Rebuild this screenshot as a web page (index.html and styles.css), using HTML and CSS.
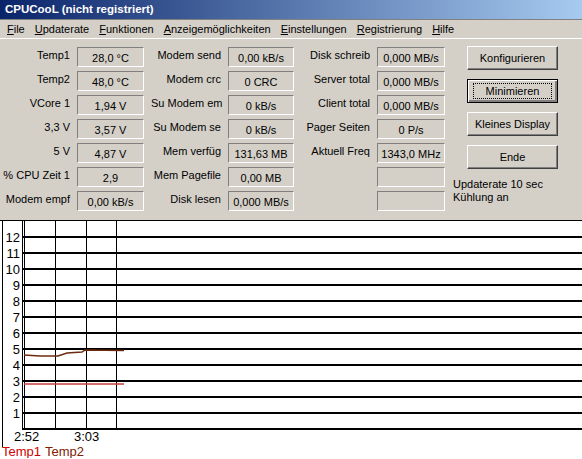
FILE: index.html
```html
<!DOCTYPE html>
<html lang="de">
<head>
  <meta charset="UTF-8">
  <title>CPUCooL</title>
  <link rel="stylesheet" href="styles.css">
</head>
<body>
  <div class="window">
    <div class="titlebar">CPUCooL (nicht registriert)</div>

    <div class="menubar">
      <span class="menu"><u>F</u>ile</span>
      <span class="menu"><u>U</u>pdaterate</span>
      <span class="menu"><u>F</u>unktionen</span>
      <span class="menu"><u>A</u>nzeigemöglichkeiten</span>
      <span class="menu"><u>E</u>instellungen</span>
      <span class="menu"><u>R</u>egistrierung</span>
      <span class="menu"><u>H</u>ilfe</span>
    </div>

    <div class="panel">
      <div class="fields col1">
        <span class="label">Temp1</span><span class="value">28,0 °C</span>
        <span class="label">Temp2</span><span class="value">48,0 °C</span>
        <span class="label">VCore 1</span><span class="value">1,94 V</span>
        <span class="label">3,3 V</span><span class="value">3,57 V</span>
        <span class="label">5 V</span><span class="value">4,87 V</span>
        <span class="label">% CPU Zeit 1</span><span class="value">2,9</span>
        <span class="label">Modem empf</span><span class="value">0,00 kB/s</span>
      </div>

      <div class="fields col2">
        <span class="label">Modem send</span><span class="value">0,00 kB/s</span>
        <span class="label">Modem crc</span><span class="value">0 CRC</span>
        <span class="label">Su Modem em</span><span class="value">0 kB/s</span>
        <span class="label">Su Modem se</span><span class="value">0 kB/s</span>
        <span class="label">Mem verfüg</span><span class="value">131,63 MB</span>
        <span class="label">Mem Pagefile</span><span class="value">0,00 MB</span>
        <span class="label">Disk lesen</span><span class="value">0,000 MB/s</span>
      </div>

      <div class="fields col3">
        <span class="label">Disk schreib</span><span class="value">0,000 MB/s</span>
        <span class="label">Server total</span><span class="value">0,000 MB/s</span>
        <span class="label">Client total</span><span class="value">0,000 MB/s</span>
        <span class="label">Pager Seiten</span><span class="value">0 P/s</span>
        <span class="label">Aktuell Freq</span><span class="value">1343,0 MHz</span>
        <span class="label"></span><span class="value"></span>
        <span class="label"></span><span class="value"></span>
      </div>

      <div class="side">
        <button class="btn">Konfigurieren</button>
        <button class="btn default"><span class="focus">Minimieren</span></button>
        <button class="btn">Kleines Display</button>
        <button class="btn">Ende</button>
        <div class="status">Updaterate 10 sec<br>Kühlung an</div>
      </div>
    </div>

    <div class="graph">
      <svg width="582" height="238" viewBox="0 0 582 238">
        <g stroke="#000" fill="none">
          <!-- Rahmen und Achsen -->
          <line x1="0" y1="0.5" x2="582" y2="0.5"/>
          <line x1="2.5" y1="0" x2="2.5" y2="227"/>
          <line x1="22.5" y1="0" x2="22.5" y2="210"/>
          <line x1="24.5" y1="0" x2="24.5" y2="210"/>
          <line x1="55.5" y1="0" x2="55.5" y2="210"/>
          <line x1="86.5" y1="0" x2="86.5" y2="210"/>
          <line x1="116.5" y1="0" x2="116.5" y2="210"/>
        </g>
        <g stroke="#000" stroke-width="2">
          <line x1="22" y1="17" x2="582" y2="17"/>
          <line x1="22" y1="33" x2="582" y2="33"/>
          <line x1="22" y1="49" x2="582" y2="49"/>
          <line x1="22" y1="65" x2="582" y2="65"/>
          <line x1="22" y1="81" x2="582" y2="81"/>
          <line x1="22" y1="97" x2="582" y2="97"/>
          <line x1="22" y1="113" x2="582" y2="113"/>
          <line x1="22" y1="129" x2="582" y2="129"/>
          <line x1="22" y1="145" x2="582" y2="145"/>
          <line x1="22" y1="161" x2="582" y2="161"/>
          <line x1="22" y1="177" x2="582" y2="177"/>
          <line x1="22" y1="193" x2="582" y2="193"/>
          <line x1="22" y1="209" x2="582" y2="209"/>
        </g>

        <g class="ylabels" text-anchor="end">
          <text x="20" y="22">12</text>
          <text x="20" y="38">11</text>
          <text x="20" y="54">10</text>
          <text x="20" y="70">9</text>
          <text x="20" y="86">8</text>
          <text x="20" y="102">7</text>
          <text x="20" y="118">6</text>
          <text x="20" y="134">5</text>
          <text x="20" y="150">4</text>
          <text x="20" y="166">3</text>
          <text x="20" y="182">2</text>
          <text x="20" y="198">1</text>
        </g>

        <text class="xlabel" x="14" y="221">2:52</text>
        <text class="xlabel" x="74" y="221">3:03</text>

        <!-- Temp2 -->
        <polyline class="temp2-line" points="24,135 40,136 58,136 67,133 82,132 85,130 124,130.5"/>
        <!-- Temp1 -->
        <polyline class="temp1-line" points="24,164 124,164"/>

        <text class="legend t1" x="2" y="236">Temp1</text>
        <text class="legend t2" x="45" y="236">Temp2</text>
      </svg>
    </div>
  </div>
</body>
</html>
```

FILE: styles.css
```css
body {
  margin: 0;
  padding: 0;
  background-color: #d4d0c8;
  font-family: "Liberation Sans", Arial, sans-serif;
  font-size: 11px;
  color: #000000;
  overflow: hidden;
}

.window {
  width: 582px;
  height: 459px;
  display: flex;
  flex-direction: column;
}

/* Titelleiste */
.titlebar {
  height: 19px;
  line-height: 18px;
  padding-left: 5px;
  box-sizing: border-box;
  background: linear-gradient(to right, #0a246a, #a6caf0);
  color: #ffffff;
  font-weight: bold;
  font-size: 11.5px;
}

/* Menue */
.menubar {
  height: 19px;
  display: flex;
  align-items: center;
  border-bottom: 1px solid #ffffff;
  box-shadow: 0 1px 0 #808080 inset;
  padding-left: 7px;
  gap: 10px;
  font-size: 11px;
}

.menu u {
  text-decoration: underline;
}

/* Werte */
.panel {
  height: 181px;
  display: flex;
  padding-top: 8px;
  box-sizing: border-box;
}

.fields {
  display: grid;
  grid-auto-rows: 20px;
  row-gap: 4px;
  column-gap: 7px;
  margin-right: 7px;
}

.col1 {
  grid-template-columns: 70px 67px;
}

.col2 {
  grid-template-columns: 70px 66px;
}

.col3 {
  grid-template-columns: 69px 68px;
  margin-right: 8px;
}

.label {
  text-align: right;
  line-height: 14px;
  padding-top: 1px;
  white-space: nowrap;
}

.value {
  border-style: solid;
  border-width: 1px;
  border-color: #808080 #ffffff #ffffff #808080;
  text-align: center;
  line-height: 14px;
  padding-top: 3px;
  box-sizing: border-box;
  white-space: nowrap;
}

/* Schaltflaechen */
.side {
  display: flex;
  flex-direction: column;
  margin-top: -1px;
}

.btn {
  width: 91px;
  height: 24px;
  margin-left: 14px;
  margin-bottom: 9px;
  padding: 0;
  background-color: #d4d0c8;
  font-family: "Liberation Sans", Arial, sans-serif;
  font-size: 11px;
  color: #000000;
  border: 1px solid;
  border-color: #ffffff #404040 #404040 #ffffff;
  box-shadow: inset -1px -1px 0 #808080;
}

.btn.default {
  border: 1px solid #000000;
  box-shadow: inset 1px 1px 0 #ffffff, inset -2px -2px 0 #808080;
  display: flex;
  align-items: center;
  justify-content: center;
}

.focus {
  display: block;
  width: 77px;
  height: 14px;
  line-height: 14px;
  border: 1px dotted #000000;
}

.status {
  line-height: 13px;
  white-space: nowrap;
}

/* Diagramm */
.graph {
  flex: 1;
  background-color: #ffffff;
}

.graph svg {
  display: block;
  font-family: "Liberation Sans", Arial, sans-serif;
  font-size: 13px;
}

.temp1-line {
  fill: none;
  stroke: #c83c3c;
  stroke-width: 1.5;
}

.temp2-line {
  fill: none;
  stroke: #6e2a10;
  stroke-width: 1.5;
}

.legend.t1 {
  fill: #d00000;
}

.legend.t2 {
  fill: #802000;
}
```
